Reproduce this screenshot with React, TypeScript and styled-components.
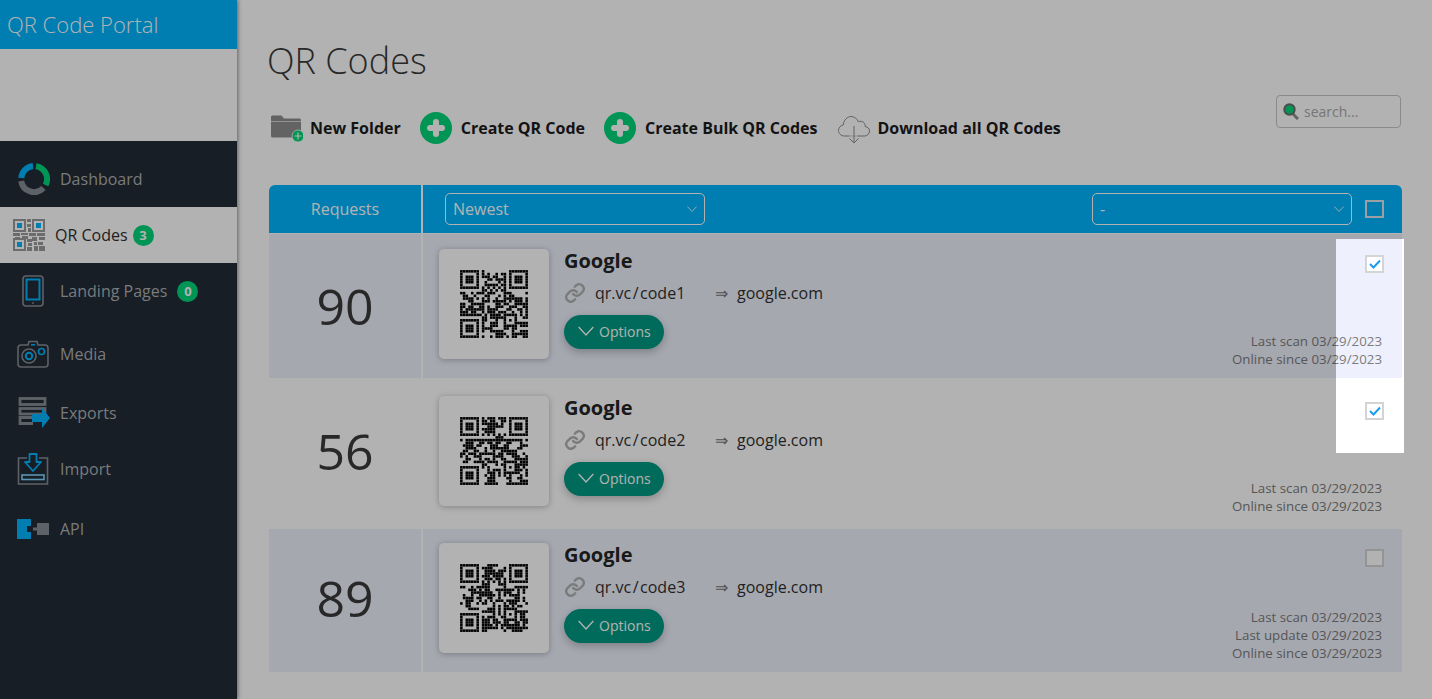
import React from "react";
import styled, { createGlobalStyle } from "styled-components";

const Global = createGlobalStyle`
  html, body { margin: 0; padding: 0; height: 100%; overflow: hidden; background: #fff; }
  body { font-family: "Open Sans", "Liberation Sans", sans-serif; }
  #root { height: 100%; }
`;

const Page = styled.div`
  position: relative;
  display: flex;
  width: 1432px;
  height: 699px;
  overflow: hidden;
  background: #fff;
`;

const Sidebar = styled.aside`
  flex: 0 0 237px;
  display: flex;
  flex-direction: column;
  box-shadow: 1px 0 4px rgba(0, 0, 0, 0.45);
  z-index: 1;
`;

const Brand = styled.div`
  height: 49px;
  padding-left: 7px;
  background: #00b5ff;
  color: #fff;
  font-size: 22px;
  font-weight: 300;
  line-height: 48px;
`;

const LogoArea = styled.div`
  height: 92px;
  background: #fff;
`;

const Nav = styled.nav`
  flex: 1;
  padding-top: 10px;
  background: #212b35;
`;

const NavItem = styled.a<{ $active?: boolean; $gap?: number; $indent: number }>`
  display: flex;
  align-items: center;
  height: 56px;
  margin-top: ${(p) => p.$gap ?? 0}px;
  padding-left: ${(p) => p.$indent}px;
  background: ${(p) => (p.$active ? "#fff" : "transparent")};
  color: ${(p) => (p.$active ? "#303030" : "#aeb0b2")};
  font-size: 16px;
`;

const NavIcon = styled.svg<{ $w: number; $mr: number }>`
  flex: none;
  width: ${(p) => p.$w}px;
  margin-right: ${(p) => p.$mr}px;
`;

const Badge = styled.span<{ $ml: number }>`
  display: inline-flex;
  align-items: center;
  justify-content: center;
  width: 21px;
  height: 21px;
  margin-left: ${(p) => p.$ml}px;
  border-radius: 50%;
  background: #00d679;
  color: #fff;
  font-size: 13px;
  font-weight: 700;
`;

const Main = styled.main`
  flex: 1;
  min-width: 0;
  padding: 0 30px 0 32px;
`;

const Title = styled.h1`
  height: 95px;
  margin: 0 0 0 -2px;
  font-size: 36px;
  font-weight: 300;
  line-height: 122px;
  color: #3a3a3a;
`;

const Toolbar = styled.div`
  display: flex;
  justify-content: space-between;
  align-items: flex-start;
  height: 90px;
  padding-right: 1px;
`;

const Actions = styled.div`
  display: flex;
  align-items: center;
  height: 32px;
  margin-top: 17px;
  margin-left: 2px;
`;

const Action = styled.a<{ $gap: number; $iconGap: number }>`
  display: flex;
  align-items: center;
  gap: ${(p) => p.$iconGap}px;
  margin-right: ${(p) => p.$gap}px;
  color: #1c1c1c;
  font-size: 16px;
  font-weight: 700;
  white-space: nowrap;
`;

const Search = styled.label`
  display: flex;
  align-items: center;
  gap: 5px;
  box-sizing: border-box;
  width: 125px;
  height: 33px;
  padding-left: 6px;
  border: 1px solid #c6c6c6;
  border-radius: 4px;
  color: #a9a9a9;
  font-size: 14px;
`;

const TableHead = styled.div`
  display: grid;
  grid-template-columns: 152px 1fr;
  height: 48px;
  border-radius: 6px 6px 0 0;
  background: #00b5ff;
  color: #fff;
`;

const HeadLabel = styled.div`
  font-size: 16px;
  line-height: 48px;
  text-align: center;
`;

const HeadControls = styled.div`
  display: flex;
  align-items: center;
  padding: 0 18px 0 22px;
  border-left: 2px solid #fff;
`;

const Select = styled.div<{ $push?: boolean }>`
  display: flex;
  align-items: center;
  justify-content: space-between;
  box-sizing: border-box;
  width: 260px;
  height: 32px;
  margin-left: ${(p) => (p.$push ? "auto" : "0")};
  padding: 0 7px 0 7px;
  border: 1px solid #fff;
  border-radius: 5px;
  font-size: 16px;
`;

const HeadBox = styled.span`
  box-sizing: border-box;
  width: 19px;
  height: 18px;
  margin-left: 13px;
  border: 2px solid #e0e6ea;
`;

const Rows = styled.div`
  margin-top: 1px;
`;

const Row = styled.div<{ $tinted: boolean; $h: number }>`
  display: grid;
  grid-template-columns: 152px 1fr;
  height: ${(p) => p.$h}px;
  background: ${(p) => (p.$tinted ? "#eef1fd" : "transparent")};
`;

const Count = styled.div<{ $lift: number }>`
  display: flex;
  align-items: center;
  justify-content: center;
  padding-bottom: ${(p) => p.$lift}px;
  font-size: 50px;
  color: #3a3a3a;
`;

const Cell = styled.div<{ $top: number; $bottom: number }>`
  display: flex;
  padding: ${(p) => p.$top}px 18px ${(p) => p.$bottom}px 16px;
  border-left: 2px solid #fff;
`;

const QrCard = styled.div`
  flex: none;
  display: flex;
  align-items: center;
  justify-content: center;
  width: 110px;
  height: 110px;
  border-radius: 5px;
  background: #fff;
  box-shadow: 0 1px 6px rgba(0, 0, 0, 0.28);
`;

const QrSvg = styled.svg`
  width: 68px;
  height: 68px;
`;

const Info = styled.div`
  flex: 1;
  margin-left: 15px;
`;

const Name = styled.div`
  height: 24px;
  font-size: 20px;
  font-weight: 700;
  line-height: 24px;
  color: #252525;
`;

const LinkRow = styled.div`
  display: flex;
  align-items: center;
  height: 24px;
  margin-top: 8px;
  font-size: 16px;
  color: #303030;
`;

const ShortLink = styled.span`
  width: 120px;
  margin-left: 9px;
`;

const Slash = styled.span`
  margin: 0 1.5px;
`;

const Arrow = styled.span`
  width: 22px;
  font-size: 16px;
  color: #777;
`;

const OptionsButton = styled.button`
  display: flex;
  align-items: center;
  gap: 5px;
  width: 100px;
  height: 34px;
  margin-top: 10px;
  padding: 0 0 2px 14px;
  border: 0;
  border-radius: 17px;
  background: #009a81;
  box-shadow: 0 3px 8px rgba(0, 0, 0, 0.25);
  color: #fff;
  font-family: inherit;
  font-size: 14px;
`;

const Side = styled.div`
  display: flex;
  flex-direction: column;
  align-items: flex-end;
  justify-content: space-between;
  padding-top: 6px;
`;

const Check = styled.span`
  display: flex;
  align-items: center;
  justify-content: center;
  box-sizing: border-box;
  width: 19px;
  height: 18px;
  border: 2px solid #d4d4d4;
  background: #fff;
`;

const Dates = styled.div`
  padding-right: 2px;
  font-size: 13.3px;
  line-height: 18px;
  text-align: right;
  color: #7c7c7c;
`;

const Spotlight = styled.div`
  position: absolute;
  left: 1336px;
  top: 239px;
  width: 68px;
  height: 214px;
  box-shadow: 0 0 0 3000px rgba(0, 0, 0, 0.3);
  pointer-events: none;
  z-index: 5;
`;

/* ---------- drawings ---------- */
const BLUE = "#00b5ff";
const GREY = "#858d94";

const qrMatrix = (seed: number) => {
  const n = 25;
  let s = seed;
  const rnd = () => {
    s = (s * 1664525 + 1013904223) >>> 0;
    return (s >>> 16) / 65536;
  };
  const m: boolean[][] = [];
  for (let y = 0; y < n; y++) {
    m.push([]);
    for (let x = 0; x < n; x++) {
      const prevX = x > 0 && m[y][x - 1];
      const prevY = y > 0 && m[y - 1][x];
      m[y].push(rnd() < 0.4 + (prevX ? 0.17 : 0) + (prevY ? 0.13 : 0));
    }
  }
  const finder = (ox: number, oy: number) => {
    for (let y = -1; y <= 7; y++)
      for (let x = -1; x <= 7; x++) {
        const px = ox + x;
        const py = oy + y;
        if (px < 0 || py < 0 || px >= n || py >= n) continue;
        const inside = x >= 0 && x <= 6 && y >= 0 && y <= 6;
        const ring = x === 0 || x === 6 || y === 0 || y === 6;
        const core = x >= 2 && x <= 4 && y >= 2 && y <= 4;
        m[py][px] = inside && (ring || core);
      }
  };
  finder(0, 0);
  finder(18, 0);
  finder(0, 18);
  for (let y = -2; y <= 2; y++)
    for (let x = -2; x <= 2; x++)
      m[18 + y][18 + x] = Math.max(Math.abs(x), Math.abs(y)) !== 1;
  for (let i = 8; i < 17; i++) {
    m[6][i] = i % 2 === 0;
    m[i][6] = i % 2 === 0;
  }
  return m;
};

const Qr = ({ seed }: { seed: number }) => (
  <QrSvg viewBox="0 0 25 25" aria-hidden>
    {qrMatrix(seed).map((row, y) =>
      row.map((on, x) =>
        on ? <rect key={`${x}-${y}`} x={x + 0.03} y={y + 0.03} width={0.94} height={0.94} fill="#000" /> : null
      )
    )}
  </QrSvg>
);

const Donut = () => (
  <NavIcon $w={32} $mr={10} viewBox="0 0 32 32" height={32} fill="none" strokeWidth={6}>
    <path d="M3.300 15A13 13 0 0 1 15 3" stroke={BLUE} />
    <path d="M18 3.200A13 13 0 0 1 27.600 22" stroke="#00d679" />
    <path d="M25.500 25A13 13 0 0 1 3.200 18" stroke={GREY} />
  </NavIcon>
);

const NavQr = () => (
  <NavIcon $w={32} $mr={10} viewBox="0 0 32 32" height={32}>
    <g fill="none" stroke="#9b9b9b" strokeWidth="2">
      <rect x="1" y="1" width="11" height="11" />
      <rect x="20" y="1" width="11" height="11" />
      <rect x="1" y="20" width="11" height="11" />
    </g>
    <rect x="4" y="4" width="5" height="5" fill={BLUE} />
    <rect x="23" y="4" width="5" height="5" fill={BLUE} />
    <rect x="4" y="23" width="5" height="5" fill={BLUE} />
    <path
      d="M14 0h4v3h-4zM14 5h4v3h-4zM15 9h3v4h-3zM0 14h7v3H0zM8 14h7v2H8zM16 14h7v3h-7zM24 14h8v3h-8zM2 18h5v2H2zM9 17h6v3H9zM19 18h5v4h-5zM26 18h6v3h-6zM14 20h5v3h-5zM15 24h4v3h-4zM21 23h3v3h-3zM25 23h5v3h-5zM14 28h5v4h-5zM21 27h4v5h-4zM26 27h6v5h-6z"
      fill="#9b9b9b"
    />
  </NavIcon>
);

const Phone = () => (
  <NavIcon $w={22} $mr={16} viewBox="0 0 22 32" height={32} fill="none">
    <rect x="1" y="1" width="20" height="30" rx="3" stroke={GREY} strokeWidth="1.600" />
    <rect x="4.500" y="4.500" width="13" height="20" stroke={BLUE} strokeWidth="2" />
    <circle cx="11" cy="28" r="0.900" fill={GREY} />
  </NavIcon>
);

const Camera = () => (
  <NavIcon $w={32} $mr={11} viewBox="0 0 32 28" height={28} fill="none">
    <path d="M4 5h7l1-3.500h8l1 3.500h7a3 3 0 0 1 3 3v16a3 3 0 0 1-3 3H4a3 3 0 0 1-3-3V8a3 3 0 0 1 3-3z" stroke={GREY} strokeWidth="1.600" />
    <circle cx="12" cy="16" r="7" stroke={GREY} strokeWidth="1.600" />
    <circle cx="12" cy="16" r="3.200" stroke={BLUE} strokeWidth="2" />
    <circle cx="24.500" cy="11.500" r="3" stroke={BLUE} strokeWidth="1.600" />
    <rect x="14" y="4" width="4" height="1.600" fill={BLUE} />
  </NavIcon>
);

const Exports = () => (
  <NavIcon $w={32} $mr={10} viewBox="0 0 32 32" height={32} fill="none">
    <g stroke={GREY} strokeWidth="2.800">
      <rect x="2" y="1.500" width="25" height="6" />
      <rect x="2" y="11.500" width="25" height="5.500" />
      <path d="M15 26.500H2v-6h13" />
    </g>
    <path d="M14 17h10v-6l8 10-8 10v-6H14z" fill={BLUE} />
  </NavIcon>
);

const Import = () => (
  <NavIcon $w={32} $mr={11} viewBox="0 0 32 32" height={32} fill="none">
    <path d="M10 5H1.500v26h29V5H22" stroke={GREY} strokeWidth="1.600" />
    <path d="M12.500 1h7v8h4.500L16 18 8 9h4.500z" stroke={BLUE} strokeWidth="1.800" strokeLinejoin="round" />
    <rect x="5" y="22" width="22" height="4.500" stroke="#7fd8ff" strokeWidth="1.600" />
  </NavIcon>
);

const Api = () => (
  <NavIcon $w={32} $mr={11} viewBox="0 0 32 20" height={20}>
    <path d="M0 0h14v7h-4v6h4v7H0z" fill={BLUE} />
    <rect x="16" y="8.500" width="4" height="3" fill={GREY} />
    <rect x="20" y="4" width="12" height="12" fill={GREY} />
  </NavIcon>
);

const Plus = () => (
  <svg width="32" height="32" viewBox="0 0 32 32">
    <circle cx="16" cy="16" r="16" fill="#00d679" />
    <path d="M16 10v12M10 16h12" stroke="#fff" strokeWidth="6" strokeLinecap="round" />
  </svg>
);

const FolderPlus = () => (
  <svg width="32" height="32" viewBox="0 0 32 32">
    <path d="M0 5a1.500 1.500 0 0 1 1.500-1.500h9l2.500 3h15.500A1.500 1.500 0 0 1 30 8v16a1.500 1.500 0 0 1-1.500 1.500h-27A1.500 1.500 0 0 1 0 24z" fill="#8e8e8e" />
    <path d="M0 9.500h30" stroke="#fff" strokeWidth="0.600" />
    <circle cx="27" cy="24" r="6" fill="#00d679" stroke="#fff" strokeWidth="0.800" />
    <path d="M27 20.500v7M23.500 24h7" stroke="#fff" strokeWidth="1.200" />
  </svg>
);

const CloudDown = () => (
  <svg width="32" height="32" viewBox="0 0 32 32" fill="none" stroke="#8c8c8c" strokeWidth="1">
    <path d="M11 24H6.500C3 24 .5 21.500.5 18.500c0-3 2.300-5.200 4.800-5.500C5.700 8 9.500 4.500 13 4.500c3.500 0 6.300 2.300 7.300 5.300 .9-.5 2-.7 3-.5 2.700.4 4.200 3 3.900 5.200 2.500.5 4.300 2 4.300 4.500 0 2.800-2.200 5-5 5H20" />
    <path d="M16 14v17M11.500 26.500L16 31l4.500-4.500" />
    <path d="M11 24h10" strokeWidth="0.500" />
  </svg>
);

const Magnifier = () => (
  <svg width="16" height="17" viewBox="0 0 16 17">
    <path d="M9.500 10.500L15 16" stroke="#8e8e8e" strokeWidth="3" />
    <circle cx="6.500" cy="6.500" r="5.200" fill="#00d679" stroke="#6f6f6f" strokeWidth="2" />
  </svg>
);

const Chevron = ({ size = 10 }: { size?: number }) => (
  <svg width={size} height={size} viewBox="0 0 12 12" fill="none" stroke="#fff" strokeWidth="1">
    <path d="M.5 3L6 9L11.500 3" />
  </svg>
);

const ChainIcon = () => (
  <svg width="22" height="22" viewBox="0 0 24 24" fill="none" stroke="#b0b0b0" strokeWidth="2.600" strokeLinecap="round" strokeLinejoin="round">
    <path d="M10 13a5 5 0 0 0 7.500.5l3-3a5 5 0 0 0-7-7l-1.700 1.700" />
    <path d="M14 11a5 5 0 0 0-7.500-.5l-3 3a5 5 0 0 0 7 7l1.700-1.700" />
  </svg>
);

const Tick = () => (
  <svg width="12" height="10" viewBox="0 0 12 10" fill="none" stroke="#1e9bf0" strokeWidth="2">
    <path d="M1 5l3.500 3.500L11 1.500" />
  </svg>
);

/* ---------- data ---------- */
const rows = [
  { count: 90, code: "code1", h: 144, top: 15, bottom: 10, lift: 0, tinted: true, seed: 7, dates: ["Last scan 03/29/2023", "Online since 03/29/2023"], checked: true },
  { count: 56, code: "code2", h: 151, top: 18, bottom: 14, lift: 6, tinted: false, seed: 23, dates: ["Last scan 03/29/2023", "Online since 03/29/2023"], checked: true },
  { count: 89, code: "code3", h: 143, top: 14, bottom: 10, lift: 5, tinted: true, seed: 91, dates: ["Last scan 03/29/2023", "Last update 03/29/2023", "Online since 03/29/2023"], checked: false },
];

export default function App() {
  return (
    <Page>
      <Global />
      <Sidebar>
        <Brand>QR Code Portal</Brand>
        <LogoArea />
        <Nav>
          <NavItem $indent={18}><Donut />Dashboard</NavItem>
          <NavItem $indent={13} $active><NavQr />QR Codes<Badge $ml={5}>3</Badge></NavItem>
          <NavItem $indent={22}><Phone />Landing Pages<Badge $ml={10}>0</Badge></NavItem>
          <NavItem $indent={17} $gap={7}><Camera />Media</NavItem>
          <NavItem $indent={18} $gap={3}><Exports />Exports</NavItem>
          <NavItem $indent={17}><Import />Import</NavItem>
          <NavItem $indent={17} $gap={4}><Api />API</NavItem>
        </Nav>
      </Sidebar>
      <Main>
        <Title>QR Codes</Title>
        <Toolbar>
          <Actions>
            <Action $gap={19} $iconGap={7}><FolderPlus />New Folder</Action>
            <Action $gap={19} $iconGap={9}><Plus />Create QR Code</Action>
            <Action $gap={21} $iconGap={9}><Plus />Create Bulk QR Codes</Action>
            <Action $gap={0} $iconGap={7}><CloudDown />Download all QR Codes</Action>
          </Actions>
          <Search><Magnifier />search...</Search>
        </Toolbar>
        <TableHead>
          <HeadLabel>Requests</HeadLabel>
          <HeadControls>
            <Select>Newest<Chevron /></Select>
            <Select $push>-<Chevron /></Select>
            <HeadBox />
          </HeadControls>
        </TableHead>
        <Rows>
          {rows.map((r) => (
            <Row key={r.code} $tinted={r.tinted} $h={r.h}>
              <Count $lift={r.lift}>{r.count}</Count>
              <Cell $top={r.top} $bottom={r.bottom}>
                <QrCard><Qr seed={r.seed} /></QrCard>
                <Info>
                  <Name>Google</Name>
                  <LinkRow>
                    <ChainIcon />
                    <ShortLink>qr.vc<Slash>/</Slash>{r.code}</ShortLink>
                    <Arrow>⇒</Arrow>
                    google.com
                  </LinkRow>
                  <OptionsButton><Chevron size={16} />Options</OptionsButton>
                </Info>
                <Side>
                  <Check>{r.checked && <Tick />}</Check>
                  <Dates>{r.dates.map((d) => <div key={d}>{d}</div>)}</Dates>
                </Side>
              </Cell>
            </Row>
          ))}
        </Rows>
      </Main>
      <Spotlight />
    </Page>
  );
}
